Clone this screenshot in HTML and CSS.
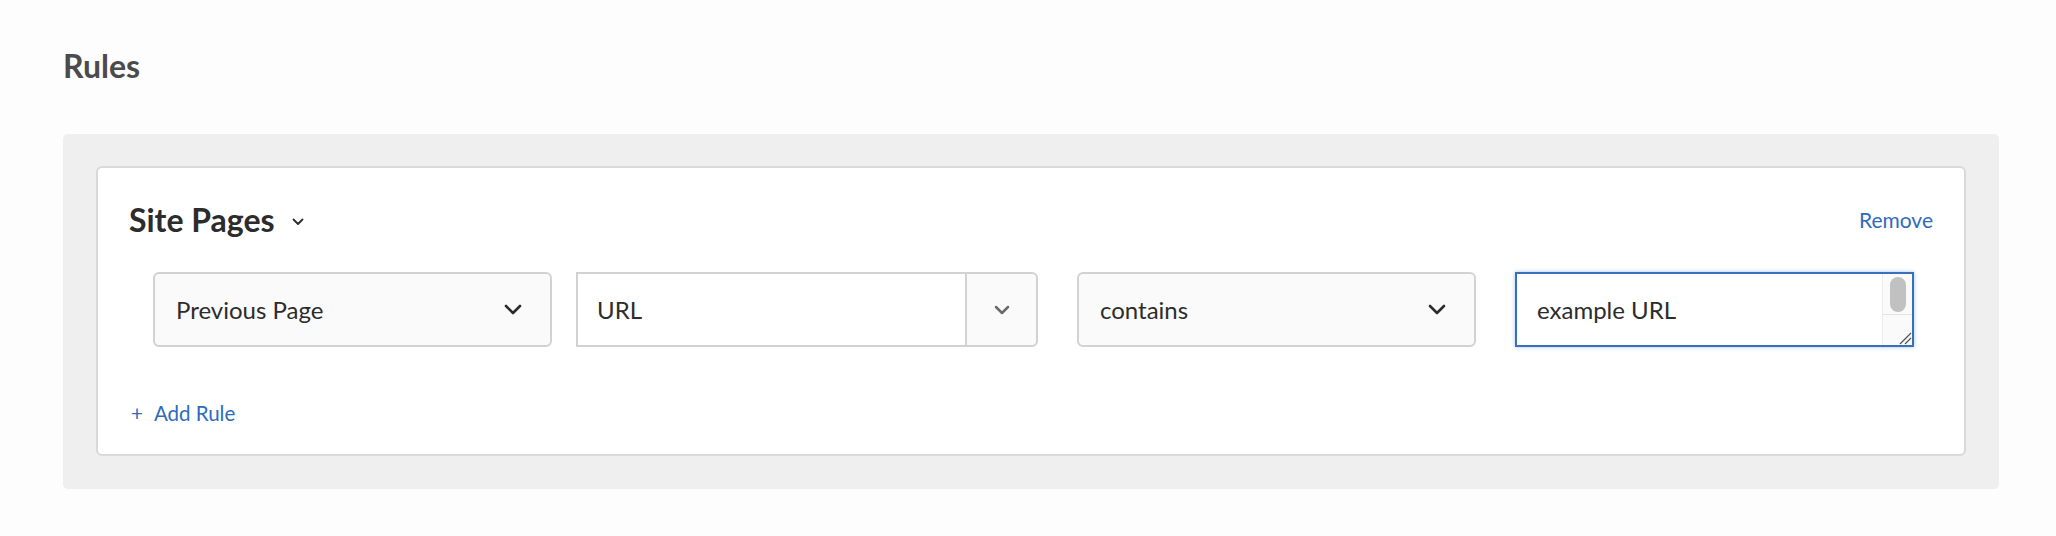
FILE: index.html
```html
<!DOCTYPE html>
<html lang="en">
<head>
<meta charset="utf-8">
<title>Rules</title>
<link rel="stylesheet" href="styles.css">
</head>
<body>
<div class="page">
  <h1 class="title">Rules</h1>
  <div class="panel">
    <div class="card">
      <div class="card-head">
        <div class="group-name">
          <span>Site Pages</span>
          <svg class="small-chev" width="12" height="8" viewBox="0 0 12 8"><path d="M1.5 1.5 L6 6 L10.5 1.5" fill="none" stroke="#2c2c2c" stroke-width="1.8" stroke-linecap="round" stroke-linejoin="round"/></svg>
        </div>
        <a class="link remove">Remove</a>
      </div>
      <div class="rule-row">
        <div class="select w-select">
          <span>Previous Page</span>
          <svg class="chev" width="18" height="12" viewBox="0 0 18 12"><path d="M2 2 L9 9 L16 2" fill="none" stroke="#2c2c2c" stroke-width="2.6" stroke-linecap="round" stroke-linejoin="round"/></svg>
        </div>
        <div class="combo">
          <div class="combo-input">URL</div>
          <div class="combo-btn">
            <svg width="16" height="10" viewBox="0 0 16 10"><path d="M2 2 L8 8 L14 2" fill="none" stroke="#6a6a6a" stroke-width="2.5" stroke-linecap="round" stroke-linejoin="round"/></svg>
          </div>
        </div>
        <div class="select w-select op">
          <span>contains</span>
          <svg class="chev" width="18" height="12" viewBox="0 0 18 12"><path d="M2 2 L9 9 L16 2" fill="none" stroke="#2c2c2c" stroke-width="2.6" stroke-linecap="round" stroke-linejoin="round"/></svg>
        </div>
        <div class="textarea">
          <div class="ta-text">example URL</div>
          <div class="ta-scroll">
            <div class="ta-track"><div class="ta-thumb"></div></div>
            <div class="ta-corner">
              <svg width="14" height="14" viewBox="0 0 14 14"><path d="M2 13 L13 2 M7 13 L13 7" stroke="#555" stroke-width="1.3" fill="none"/></svg>
            </div>
          </div>
        </div>
      </div>
      <a class="link add"><span class="plus">+</span>Add Rule</a>
    </div>
  </div>
</div>
</body>
</html>
```
FILE: styles.css
```css
html, body {
  margin: 0;
  background: #fdfdfd;
}
body {
  font-family: Lato, "Open Sans", "Liberation Sans", sans-serif;
  color: #2c2c2c;
}
.page {
  padding: 48px 57px 0 63px;
}
.title {
  margin: 0;
  font-size: 32px;
  line-height: 36px;
  font-weight: 700;
  color: #4b4b4b;
}
.panel {
  margin-top: 50px;
  background: #efefef;
  border-radius: 5px;
  padding: 32px 33px 33px 33px;
}
.card {
  background: #fff;
  border: 2px solid #d9d9d9;
  border-radius: 6px;
  padding: 33px 31px 28px 31px;
}
.card-head {
  display: flex;
  align-items: center;
  justify-content: space-between;
}
.group-name {
  display: flex;
  align-items: center;
  font-size: 32px;
  line-height: 38px;
  font-weight: 700;
  color: #2c2c2c;
}
.small-chev {
  margin-left: 17px;
  margin-top: 4px;
}
.link {
  color: #2f6bbd;
  cursor: pointer;
}
.remove {
  font-size: 21px;
  line-height: 24px;
  margin-top: 0;
}
.rule-row {
  display: flex;
  margin: 33px 0 0 24px;
  height: 75px;
}
.select {
  box-sizing: border-box;
  height: 75px;
  display: flex;
  align-items: center;
  justify-content: space-between;
  background: #fafafa;
  border: 2px solid #d2d2d2;
  border-radius: 6px;
  padding: 0 28px 0 21px;
  font-size: 24px;
}
.w-select {
  width: 399px;
}
.op {
  margin-left: 39px;
}
.combo {
  display: flex;
  width: 462px;
  height: 75px;
  margin-left: 24px;
  box-sizing: border-box;
}
.combo-input {
  flex: 1;
  display: flex;
  align-items: center;
  box-sizing: border-box;
  background: #fff;
  border: 2px solid #d2d2d2;
  border-right: none;
  padding-left: 19px;
  font-size: 24px;
}
.combo-btn {
  width: 73px;
  box-sizing: border-box;
  display: flex;
  align-items: center;
  justify-content: center;
  background: #fafafa;
  border: 2px solid #d2d2d2;
  border-radius: 0 6px 6px 0;
}
.textarea {
  margin-left: 39px;
  width: 399px;
  height: 75px;
  box-sizing: border-box;
  display: flex;
  background: #fff;
  border: 2px solid #3b6fbb;
  box-shadow: 0 0 4px rgba(38, 128, 235, 0.45);
}
.ta-text {
  flex: 1;
  display: flex;
  align-items: center;
  padding-left: 20px;
  font-size: 24px;
}
.ta-scroll {
  width: 29px;
  display: flex;
  flex-direction: column;
  background: #fafafa;
  border-left: 1px solid #ececec;
}
.ta-track {
  flex: 0 0 41px;
  display: flex;
  justify-content: center;
  padding-top: 3px;
  box-sizing: border-box;
  border-bottom: 1px solid #e3e3e3;
}
.ta-thumb {
  width: 16px;
  height: 35px;
  border-radius: 8px;
  background: #c1c1c1;
}
.ta-corner {
  flex: 1;
  display: flex;
  align-items: flex-end;
  justify-content: flex-end;
}
.add {
  display: inline-block;
  margin: 53px 0 0 2px;
  font-size: 20.5px;
  line-height: 26px;
}
.plus {
  margin-right: 11px;
}
```
